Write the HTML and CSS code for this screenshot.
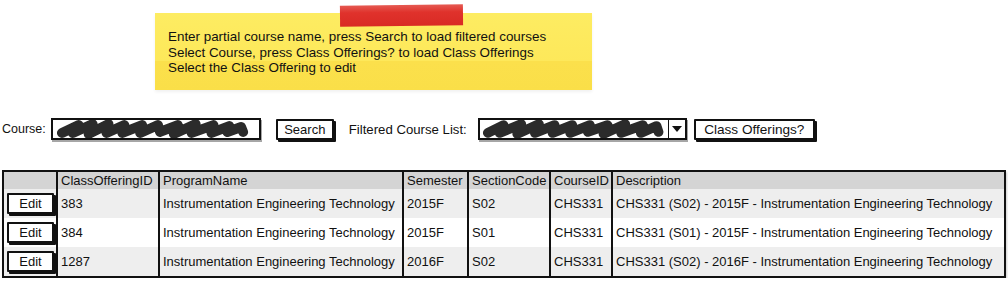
FILE: index.html
```html
<!DOCTYPE html>
<html lang="en">
<head>
  <meta charset="UTF-8" />
  <title>Class Offerings</title>
  <link rel="stylesheet" href="styles.css">
</head>
<body>
  <div class="note">
    <div class="tape"></div>
    <p>Enter partial course name, press Search to load filtered courses</p>
    <p>Select Course, press Class Offerings? to load Class Offerings</p>
    <p class="last">Select the Class Offering to edit</p>
  </div>

  <div class="controls">
    <label class="lbl">Course:</label>
    <div class="field course-field">
      <svg width="206" height="18" viewBox="0 0 206 18">
        <path d="M7 13 L24 5 L18 13 L38 4 L34 14 L54 4 L52 13 L70 5 L68 13 L88 5 L86 13 L104 5 L106 12 L124 5 L120 14 L142 4 L138 13 L160 5 L158 13 L176 6 L174 12 L188 7 L190 12"
              fill="none" stroke="#2b2b2b" stroke-width="10" stroke-linecap="round" stroke-linejoin="round"/>
      </svg>
    </div>
    <button class="btn search-btn">Search</button>
    <label class="lbl filter-lbl">Filtered Course List:</label>
    <div class="field select-field">
      <svg width="190" height="18" viewBox="0 0 190 18">
        <path d="M6 13 L22 5 L18 13 L40 4 L36 14 L58 4 L54 13 L74 5 L72 13 L92 5 L90 13 L110 5 L108 12 L128 5 L124 14 L146 4 L142 13 L164 5 L162 13 L178 6 L180 12"
              fill="none" stroke="#2b2b2b" stroke-width="10" stroke-linecap="round" stroke-linejoin="round"/>
      </svg>
      <span class="arrow">
        <svg width="10" height="6" viewBox="0 0 10 6"><path d="M0 0 L10 0 L5 6 Z" fill="#111"/></svg>
      </span>
    </div>
    <button class="btn offer-btn">Class Offerings?</button>
  </div>

  <table class="grid">
    <colgroup>
      <col style="width:54px">
      <col style="width:102px">
      <col style="width:244px">
      <col style="width:65px">
      <col style="width:82px">
      <col style="width:62px">
      <col>
    </colgroup>
    <thead>
      <tr>
        <th></th>
        <th>ClassOfferingID</th>
        <th>ProgramName</th>
        <th>Semester</th>
        <th>SectionCode</th>
        <th>CourseID</th>
        <th>Description</th>
      </tr>
    </thead>
    <tbody>
      <tr class="shade">
        <td class="act"><button class="btn edit-btn">Edit</button></td>
        <td>383</td>
        <td>Instrumentation Engineering Technology</td>
        <td>2015F</td>
        <td>S02</td>
        <td>CHS331</td>
        <td>CHS331 (S02) - 2015F - Instrumentation Engineering Technology</td>
      </tr>
      <tr>
        <td class="act"><button class="btn edit-btn">Edit</button></td>
        <td>384</td>
        <td>Instrumentation Engineering Technology</td>
        <td>2015F</td>
        <td>S01</td>
        <td>CHS331</td>
        <td>CHS331 (S01) - 2015F - Instrumentation Engineering Technology</td>
      </tr>
      <tr class="shade">
        <td class="act"><button class="btn edit-btn">Edit</button></td>
        <td>1287</td>
        <td>Instrumentation Engineering Technology</td>
        <td>2016F</td>
        <td>S02</td>
        <td>CHS331</td>
        <td>CHS331 (S02) - 2016F - Instrumentation Engineering Technology</td>
      </tr>
    </tbody>
  </table>
</body>
</html>
```

FILE: styles.css
```css
body {
  margin: 0;
  font-family: "Liberation Sans", Arial, sans-serif;
  font-size: 13px;
  color: #111;
  background: white;
}
.note {
  position: relative;
  margin: 13px 0 0 155px;
  width: 437px;
  height: 77px;
  box-sizing: border-box;
  padding: 16px 0 0 13px;
  background: linear-gradient(#fdec62 0%, #fde85a 62%, #fbe04c 63%, #fadf48 100%);
  box-shadow: 0 2px 3px rgba(0,0,0,0.06);
}
.note p {
  margin: 0;
  font-size: 13.4px;
  line-height: 15.5px;
}
.tape {
  position: absolute;
  left: 185px;
  top: -8px;
  width: 123px;
  height: 21px;
  background: linear-gradient(#e55a52 0%, #e0322c 35%, #d92a24 100%);
  transform: rotate(-0.6deg);
}
.controls {
  display: flex;
  align-items: center;
  height: 24px;
  margin: 27px 0 0 2px;
}
.lbl {
  font-size: 12.5px;
  margin-right: 5px;
}
.field {
  display: flex;
  align-items: center;
  height: 22px;
  box-sizing: border-box;
  border: 2px solid #111;
  background: white;
  box-shadow: 1px 2px 0 rgba(0,0,0,0.35);
}
.course-field {
  width: 210px;
  padding-left: 2px;
}
.select-field {
  width: 209px;
  padding-left: 2px;
  margin-left: 6px;
}
.arrow {
  margin-left: auto;
  width: 16px;
  height: 18px;
  display: flex;
  align-items: center;
  justify-content: center;
  border-left: 1px solid #111;
}
.btn {
  font-family: "Liberation Sans", Arial, sans-serif;
  font-size: 13px;
  color: #111;
  background: white;
  border: 2px solid #111;
  border-radius: 1px;
  box-shadow: 2px 2px 0 #111;
  height: 21px;
  padding: 0 5px;
  cursor: pointer;
}
.search-btn {
  margin-left: 15px;
  width: 58px;
}
.filter-lbl {
  font-size: 13.2px;
  margin-left: 15px;
}
.offer-btn {
  font-size: 13.6px;
  margin-left: 7px;
  width: 121px;
}
.grid {
  margin: 29px 0 0 2px;
  width: 1004px;
  table-layout: fixed;
  border-collapse: collapse;
  border: 2px solid #111;
  box-shadow: 1px 2px 2px rgba(0,0,0,0.2);
}
.grid th {
  background: #d4d4d4;
  font-weight: normal;
  text-align: left;
  height: 17px;
  padding: 0 3px;
  border-left: 2px solid #111;
  white-space: nowrap;
  overflow: hidden;
}
.grid td {
  height: 29px;
  padding: 0 3px;
  border-left: 2px solid #111;
  white-space: nowrap;
  overflow: hidden;
}
.grid tr.shade td {
  background: #eeeeee;
}
.grid td.act {
  padding: 0 0 0 3px;
}
.edit-btn {
  width: 47px;
  height: 21px;
  padding: 0;
}
```
